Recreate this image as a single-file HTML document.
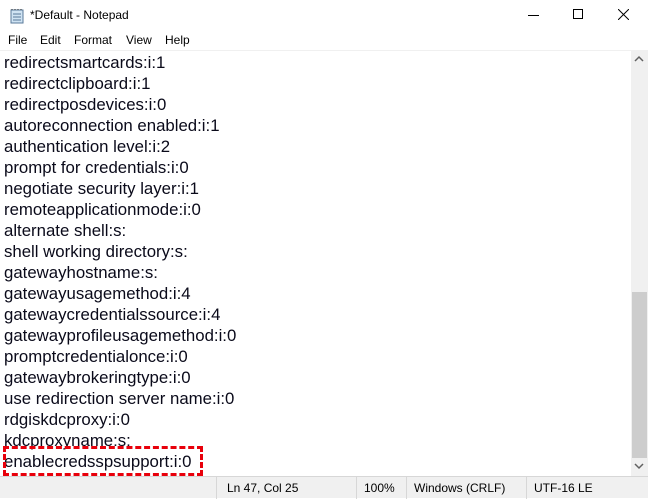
<!DOCTYPE html>
<html><head><style>
*{margin:0;padding:0;box-sizing:border-box}
body{width:648px;height:498px;overflow:hidden;background:#fff;font-family:"Liberation Sans",sans-serif;position:relative}
.title{position:absolute;left:0;top:0;width:648px;height:31px;background:#fff}
.title .t{position:absolute;left:30px;top:8px;font-size:12px;color:#000}
.menu{position:absolute;top:33px;font-size:12px;color:#000}
.edit{position:absolute;left:0;top:50px;width:631px;height:426px;border-top:1px solid #f0f0f0}
.line{position:absolute;left:4px;font-size:16.8px;color:#0a0a1a;white-space:pre;line-height:21px}
.sb{position:absolute;left:631px;top:50px;width:17px;height:426px;background:#f0f0f0}
.thumb{position:absolute;left:632px;top:292px;width:15px;height:166px;background:#cdcdcd}
.status{position:absolute;left:0;top:476px;width:648px;height:22px;background:#f0f0f0;border-top:1px solid #d7d7d7;font-size:12px}
.status span{position:absolute;top:4px}
.sep{position:absolute;top:0;width:1px;height:22px;background:#d7d7d7}
.red{position:absolute;left:3px;top:446px;width:200px;height:30px;border:3px dashed #e8000b}
</style></head><body>
<div class="title">
<svg style="position:absolute;left:9px;top:8px" width="16" height="16"><rect x="2" y="2" width="12" height="13" fill="#cfe3f3" stroke="#5a7a9a"/><path d="M4 6h8M4 9h8M4 12h8" stroke="#5a7a9a"/><path d="M3 2v-1M6 2v-1M9 2v-1M12 2v-1" stroke="#333"/></svg>
<span class="t">*Default - Notepad</span>
<div style="position:absolute;left:528px;top:15px;width:11px;height:1px;background:#000"></div>
<div style="position:absolute;left:573px;top:9px;width:10px;height:10px;border:1px solid #000"></div>
<svg style="position:absolute;left:618px;top:9px" width="11" height="11"><path d="M0 0L11 11M11 0L0 11" stroke="#000"/></svg>
</div>
<span class="menu" style="left:8px">File</span>
<span class="menu" style="left:40px">Edit</span>
<span class="menu" style="left:74px">Format</span>
<span class="menu" style="left:126px">View</span>
<span class="menu" style="left:165px">Help</span>
<div class="edit"></div>
<div class="line" style="top:52px">redirectsmartcards:i:1</div>
<div class="line" style="top:73px">redirectclipboard:i:1</div>
<div class="line" style="top:94px">redirectposdevices:i:0</div>
<div class="line" style="top:115px">autoreconnection enabled:i:1</div>
<div class="line" style="top:136px">authentication level:i:2</div>
<div class="line" style="top:157px">prompt for credentials:i:0</div>
<div class="line" style="top:178px">negotiate security layer:i:1</div>
<div class="line" style="top:199px">remoteapplicationmode:i:0</div>
<div class="line" style="top:220px">alternate shell:s:</div>
<div class="line" style="top:241px">shell working directory:s:</div>
<div class="line" style="top:262px">gatewayhostname:s:</div>
<div class="line" style="top:283px">gatewayusagemethod:i:4</div>
<div class="line" style="top:304px">gatewaycredentialssource:i:4</div>
<div class="line" style="top:325px">gatewayprofileusagemethod:i:0</div>
<div class="line" style="top:346px">promptcredentialonce:i:0</div>
<div class="line" style="top:367px">gatewaybrokeringtype:i:0</div>
<div class="line" style="top:388px">use redirection server name:i:0</div>
<div class="line" style="top:409px">rdgiskdcproxy:i:0</div>
<div class="line" style="top:430px">kdcproxyname:s:</div>
<div class="line" style="top:451px">enablecredsspsupport:i:0</div>
<div class="red"></div>
<div class="sb"></div>
<div class="thumb"></div>
<svg style="position:absolute;left:634px;top:55px" width="10" height="8"><path d="M1 6L5 2L9 6" stroke="#606060" stroke-width="1.5" fill="none"/></svg>
<svg style="position:absolute;left:634px;top:462px" width="10" height="8"><path d="M1 2L5 6L9 2" stroke="#606060" stroke-width="1.5" fill="none"/></svg>
<div class="status">
<div class="sep" style="left:216px"></div>
<span style="left:227px">Ln 47, Col 25</span>
<div class="sep" style="left:356px"></div>
<span style="left:364px">100%</span>
<div class="sep" style="left:406px"></div>
<span style="left:414px">Windows (CRLF)</span>
<div class="sep" style="left:526px"></div>
<span style="left:534px">UTF-16 LE</span>
</div>
</body></html>
